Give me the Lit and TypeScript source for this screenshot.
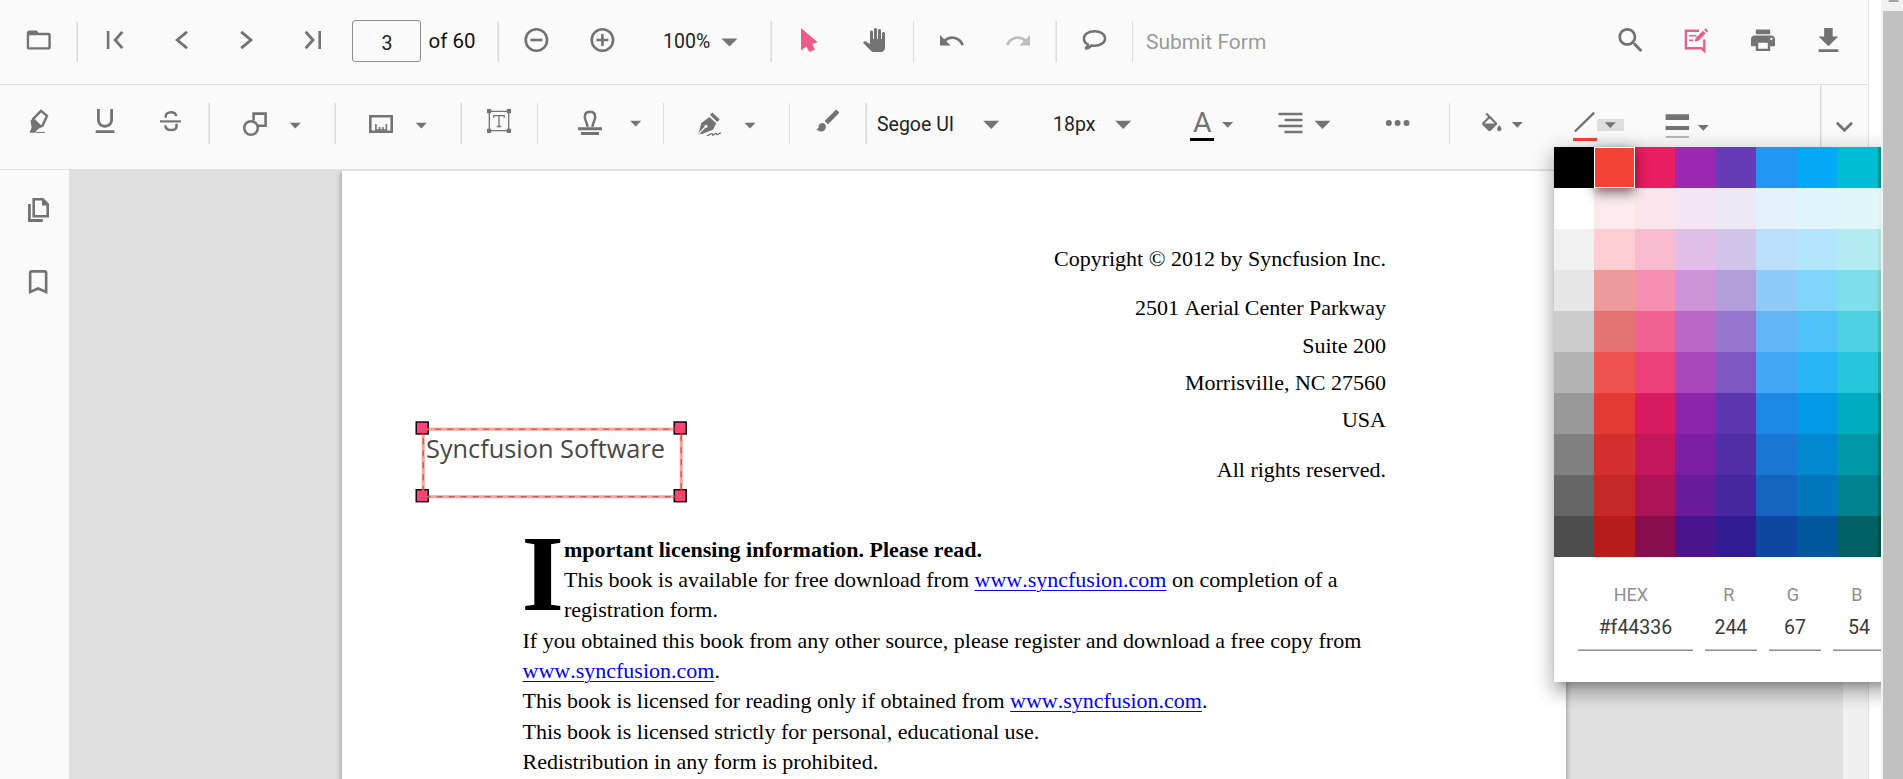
import { LitElement, html, svg, css, TemplateResult } from "lit";
import { customElement, property } from "lit/decorators.js";
import { styleMap } from "lit/directives/style-map.js";
import { classMap } from "lit/directives/class-map.js";

type Slot = [number, TemplateResult];

/* A 24px wide glyph; tall ones leave room for a colour bar under the drawing. */
const icon = (body: unknown, box = "0 0 24 24", h = 24, w = 24) =>
  html`<svg class="icon" width=${w} height=${h} viewBox=${box}>${body}</svg>`;
const fill = (d: string) => svg`<path d=${d} fill="currentColor"/>`;
const line = (d: string, w = 2.6) => svg`<path d=${d} fill="none" stroke="currentColor" stroke-width=${w}/>`;
const tall = (body: unknown, box = "0 0 24 32") => icon(body, box, 32);
const caret = (w: number, h: number, y: number, x = 0) =>
  icon(fill(`M${x} ${y}h${w}l${-w / 2} ${h}z`), "0 0 18 32", 32, 18);
const sep = (wide = false) => html`<i class=${classMap({ sep: true, wide })}></i>`;

const TOP: Slot[] = [
  [27, icon(fill("M20 6h-8l-2-2H4c-1.1 0-1.99.9-1.99 2L2 18c0 1.1.9 2 2 2h16c1.1 0 2-.9 2-2V8c0-1.1-.9-2-2-2zm0 12H4V8h16v10z"), "2.2 2 20 20")],
  [76, sep(true)],
  [103, icon([line("M5.1 3v18"), line("M19.3 3.8L12.2 12l7.1 8.2", 2.8)])],
  [169, icon(line("M18 3.9L8.2 12l9.8 8.1", 2.8))],
  [235, icon(line("M6.2 3.9L16 12l-9.8 8.1", 2.8))],
  [301, icon([line("M18.7 3v18"), line("M4.7 3.8L12 12l-7.3 8.2", 2.8)])],
  [352, html`<div class="page-input">3</div>`],
  [428, html`<span class="label of">of 60</span>`],
  [497, sep(true)],
  [524, icon([svg`<circle cx="12.4" cy="12" r="10.7" fill="none" stroke="currentColor" stroke-width="2.6"/>`, line("M6.4 12h12")])],
  [590, icon([svg`<circle cx="12.4" cy="12" r="10.7" fill="none" stroke="currentColor" stroke-width="2.6"/>`, line("M6.4 12h12M12.4 6v12")])],
  [663, html`<span class="label zoom">100%</span>`],
  [721, caret(16, 8, 10.5, 0.5)],
  [770, sep(true)],
  [797, html`<span class="pink">${icon(fill("M4 0V22.3L9.4 18.5 12.3 24 17.9 21.8 15.4 15.8 20.7 14.2Z"))}</span>`],
  [862, icon(fill("M23 5.5V20c0 2.2-1.8 4-4 4h-7.3c-1.08 0-2.1-.43-2.85-1.19L1 14.83s1.26-1.23 1.3-1.25c.22-.19.49-.29.79-.29.22 0 .42.06.6.16.04.01 4.31 2.46 4.31 2.46V4c0-.83.67-1.5 1.5-1.5S11 3.17 11 4v7h1V1.5c0-.83.67-1.5 1.5-1.5S15 .67 15 1.5V11h1V2.5c0-.83.67-1.5 1.5-1.5s1.5.67 1.5 1.5V11h1V5.5c0-.83.67-1.5 1.5-1.5s1.5.67 1.5 1.5z"))],
  [913, sep()],
  [940, icon(fill("M12.5 8c-2.65 0-5.05.99-6.9 2.6L2 7v9h9l-3.62-3.62c1.39-1.16 3.16-1.88 5.12-1.88 3.54 0 6.55 2.31 7.6 5.5l2.37-.78C21.08 11.03 17.15 8 12.5 8z"), "2 1 20.5 20.5")],
  [1006, html`<span class="off">${icon(fill("M18.4 10.6C16.55 8.99 14.15 8 11.5 8c-4.65 0-8.58 3.03-9.96 7.22L3.9 16c1.05-3.19 4.05-5.5 7.6-5.5 1.95 0 3.73.72 5.12 1.88L13 16h9V7l-3.6 3.6z"), "1.5 1 20.5 20.5")}</span>`],
  [1055, sep(true)],
  [1082, icon(line("M6 16.4C3.2 15 1.9 12.8 1.9 10.4 1.9 6.3 6.6 3.2 12.5 3.2s10.6 3.1 10.6 7.2-4.7 7.4-10.6 7.4c-1 0-2-.1-2.8-.3C8.2 19 6.2 20.2 3.3 20.7 5 19.4 5.9 18.2 6 16.4z", 2.5))],
  [1132, sep()],
  [1146, html`<span class="label submit">Submit Form</span>`],
  [1618, icon(fill("M15.5 14h-.79l-.28-.27C15.41 12.59 16 11.11 16 9.5 16 5.91 13.09 3 9.5 3S3 5.91 3 9.5 5.91 16 9.5 16c1.61 0 3.09-.59 4.23-1.57l.27.28v.79l5 4.99L20.49 19l-4.99-5zm-6 0C7.01 14 5 11.99 5 9.5S7.01 5 9.5 5 14 7.01 14 9.5 11.99 14 9.5 14z"), "2.7 3 17.5 17.5")],
  [1684, html`<span class="pink">${icon([
    line("M15 2.8H1.9v17.5h15.8l2.6 2.4V11.5", 2.4),
    line("M5 7.8h7.5M5 12.3h4.5", 1.5),
    fill("M10.8 13.6l.9-3.7L18.9 2.8l2.7 2.7-7.2 7.2zM20 1.8l1.6-1.5 2.6 2.6-1.5 1.6z"),
  ])}</span>`],
  [1751, icon(fill("M19 8H5c-1.66 0-3 1.34-3 3v6h4v4h12v-4h4v-6c0-1.66-1.34-3-3-3zm-3 11H8v-5h8v5zm3-7c-.55 0-1-.45-1-1s.45-1 1-1 1 .45 1 1-.45 1-1 1zm-1-9H6v4h12V3z"), "2 1.8 20 20")],
  [1816, icon(fill("M19 9h-4V3H9v6H5l7 7 7-7zM5 18v2h14v-2H5z"), "3.2 3 17 17")],
];

const BOTTOM: Slot[] = [
  [26, tall([line("M6.5 10.6L15 1.8l6 5-5 11", 2.4), fill("M4.6 11.5l3-2.5L16.8 17.8 12.2 20 8.6 23.7H3.4l2.2-5z"), line("M9.5 23.4H19", 1)])],
  [93, tall(fill("M12 17c3.31 0 6-2.69 6-6V3h-2.100v8c0 2.200-1.700 3.900-3.900 3.900S8.100 13.200 8.100 11V3H6v8c0 3.310 2.690 6 6 6zm-7 2v2h14v-2H5z"), "3 3 18 24")],
  [158, tall([line("M2 12.4h21", 2.1), line("M7.8 8.8C7 5.4 9.5 3.2 12.9 3.2c3 0 5.1 1.5 5.3 4", 2.5), line("M7.3 16.3c.2 3.1 2.6 4.8 5.9 4.8 3.2 0 5.4-1.6 5.4-4.1 0-.9-.2-1.5-.5-2.1", 2.5)])],
  [208, sep(true)],
  [243, tall([svg`<circle cx="8" cy="19" r="6.8" fill="none" stroke="currentColor" stroke-width="2.5"/>`, line("M10.6 11.5V4.6H22.6V16.8H15")])],
  [289, caret(11, 5.8, 13.8, 0.8)],
  [334, sep(true)],
  [369, tall([line("M1.3 7.3h21.4v15.4H1.3z"), line("M6.9 15v6.5M10.6 18v3.5M14 18v3.5M17.4 15v6.5", 1.6), line("M6.2 21H18", 1.6)])],
  [415, caret(11, 5.8, 13.8, 0.8)],
  [460, sep(true)],
  [487, tall([line("M2.3 2.3h19.4v19.4H2.3z", 1.3), fill("M0 0h4.2v4.2H0zM19.8 0H24v4.2h-4.2zM0 19.8h4.2V24H0zM19.8 19.8H24V24h-4.2z"), line("M6.8 8.8V6.7h10.4v2.1M12 6.7v11M9.8 17.5h4.4", 1.3)])],
  [537, sep()],
  [578, tall([line("M9.4 18c.6-3.5-2.6-6-2.6-10 0-3.2 2-5.2 5.2-5.2S17.200 4.8 17.200 8c0 4-3.200 6.500-2.600 10", 2.5), fill("M0 18.300h24v3H0zM3 23h18v3H3z")])],
  [630, caret(11, 5.8, 11.8, 0.2)],
  [663, sep()],
  [698, tall([
    fill("M.3 25.300L3.200 14.200 11.300 8 18.300 14.200 15 20.800 4 25z"),
    svg`<path d="M.8 24.500L7.500 17.800" stroke="#fafafa" stroke-width="1.300"/><circle cx="8" cy="17.300" r="1.500" fill="#fafafa"/>`,
    line("M13.200 4.800l7.300 6.900", 3.4),
    line("M8.800 26.500c3.500.3 3.600-2.800 5.600-1.800.8.700-.8 1.500.6 1.400 1.400-.3 1.800-2.200 3.400-1.600.8.500-.2 1.300.9 1.200 1-.2 1.500-2.200 3.700-1.300", 1.2),
  ])],
  [744, caret(11, 5.8, 13.8, 0.5)],
  [789, sep()],
  [816, tall(fill("M7 14c-1.66 0-3 1.34-3 3 0 1.31-1.16 2-2 2 .92 1.22 2.49 2 4 2 2.21 0 4-1.79 4-4 0-1.66-1.34-3-3-3zm13.71-9.37l-1.34-1.34c-.39-.39-1.02-.39-1.41 0L9 12.25 11.75 15l8.96-8.96c.39-.39.39-1.02 0-1.41z"), "1.800 2.300 20 26.670")],
  [865, sep(true)],
  [877, html`<span class="label font">Segoe UI</span>`],
  [983, caret(16, 8.3, 11.7, 0.2)],
  [1053, html`<span class="label font">18px</span>`],
  [1115, caret(16, 8.3, 11.7, 0.2)],
  [1190, tall([svg`<text x="12.200" y="23.300" text-anchor="middle" font-size="28.500" font-family="Roboto, sans-serif" fill="currentColor">A</text>`, svg`<path d="M0 29h24v3H0z" fill="#000"/>`])],
  [1222, caret(11, 5.8, 13, 0.2)],
  [1278, tall(line("M.5 5h24M6.500 11h18M.5 17h24M6.500 23h18", 2.5))],
  [1314, caret(16, 8.3, 11.7, 0.5)],
  [1386, tall(fill("M-.2 14a3 3 0 1 0 6 0 3 3 0 1 0-6 0zM8.600 14a3 3 0 1 0 6 0 3 3 0 1 0-6 0zM17.500 14a3 3 0 1 0 6 0 3 3 0 1 0-6 0z"))],
  [1449, sep()],
  [1482, tall(fill("M16.56 8.94L7.62 0 6.21 1.41l2.38 2.38-5.15 5.15c-.59.59-.59 1.54 0 2.12l5.5 5.5c.29.29.68.44 1.06.44s.77-.15 1.06-.44l5.5-5.5c.59-.58.59-1.53 0-2.12zM5.21 10L10 5.21 14.790 10H5.210zM19 11.500s-2 2.170-2 3.500c0 1.100.9 2 2 2s2-.9 2-2c0-1.330-2-3.500-2-3.500z"), "3 -3.500 22.200 29.600")],
  [1511, caret(11, 5.8, 13, 0.8)],
  [1573, tall([line("M1.900 22.500L21.200 3.600", 2.4), svg`<path d="M0 29h24v3H0z" fill="#f44336"/>`])],
  [1597, html`<div class="pressed">${icon(fill("M7.800 3.200h11l-5.500 5.800z"), "0 0 27 12", 12, 27)}</div>`],
  [1665, tall(fill("M.6 5h24v6h-24zM.6 17h24v4h-24zM.6 27.700h24v1.200h-24z"), "0 0 24.600 32")],
  [1697, caret(11, 5.8, 16, 0.8)],
  [1820, html`<i class="divider"></i>`],
  [1835, tall(line("M1.900 13.700l7.500 7.500 7.600-7.500", 2.8))],
];

@customElement("viewer-toolbar")
class ViewerToolbar extends LitElement {
  @property({ attribute: false }) slots: Slot[] = [];
  static styles = css`
    :host { display: block; height: 84px; background: #fafafa; border-bottom: 1px solid #dfdfdf; color: #737373; --drop: 28px; --rule: 21px; }
    :host([secondary]) { --drop: 24px; --rule: 18px; }
    .row { display: grid; height: 84px; align-items: start; }
    .cell { min-width: 0; white-space: nowrap; height: 84px; }
    .icon { display: block; margin-top: var(--drop); overflow: visible; }
    .sep { display: block; width: 1px; height: 41px; margin-top: var(--rule); background: #dcdcdc; }
    .sep.wide { width: 2px; background: linear-gradient(90deg, #e9e9e9 50%, #dcdcdc 50%); }
    .divider { display: block; width: 2px; height: 84px; background: linear-gradient(90deg, #d8d8d8 50%, #ececec 50%); }
    .page-input { width: 69px; height: 42px; box-sizing: border-box; margin-top: 20px; border: 1px solid #8f8f8f; border-radius: 3px;
      font: 19.500px/45px Roboto, sans-serif; text-align: center; color: #222; padding-left: 1px; }
    .label { display: block; font: 19.500px/24px Roboto, sans-serif; color: #111; margin-top: 30px; }
    .of { font-size: 20.500px; margin-top: 29px; padding-left: 0.500px; }
    .zoom { color: #222; }
    .submit { font-size: 21px; color: #9a9a9a; }
    .font { margin-top: 28px; color: #222; }
    .pink { color: #ed5b8c; }
    .off { color: #bdbdbd; }
    .pressed { width: 27px; height: 12px; margin-top: 34px; background: #dedede; }
    .pressed .icon { margin-top: 0; }
  `;
  render() {
    const starts = this.slots.map(([at]) => at);
    const columns = starts.map((at, i) => (i + 1 < starts.length ? `${starts[i + 1] - at}px` : "1fr")).join(" ");
    return html`<div class="row" style=${styleMap({ gridTemplateColumns: columns, paddingLeft: `${starts[0] ?? 0}px` })}>
      ${this.slots.map(([, body]) => html`<div class="cell">${body}</div>`)}
    </div>`;
  }
}

const PALETTE = [
  "#000000 #f44336 #e91e63 #9c27b0 #673ab7 #2196f3 #03a9f4 #00bcd4 #009688",
  "#ffffff #ffebee #fce4ec #f3e5f5 #ede7f6 #e3f2fd #e1f5fe #e0f7fa #e0f2f1",
  "#f2f2f2 #ffcdd2 #f8bbd0 #e1bee7 #d1c4e9 #bbdefb #b3e5fc #b2ebf2 #b2dfdb",
  "#e6e6e6 #ef9a9a #f48fb1 #ce93d8 #b39ddb #90caf9 #81d4fa #80deea #80cbc4",
  "#cccccc #e57373 #f06292 #ba68c8 #9575cd #64b5f6 #4fc3f7 #4dd0e1 #4db6ac",
  "#b3b3b3 #ef5350 #ec407a #ab47bc #7e57c2 #42a5f5 #29b6f6 #26c6da #26a69a",
  "#999999 #e53935 #d81b60 #8e24aa #5e35b1 #1e88e5 #039be5 #00acc1 #00897b",
  "#808080 #d32f2f #c2185b #7b1fa2 #512da8 #1976d2 #0288d1 #0097a7 #00796b",
  "#666666 #c62828 #ad1457 #6a1b9a #4527a0 #1565c0 #0277bd #00838f #00695c",
  "#4d4d4d #b71c1c #880e4f #4a148c #311b92 #0d47a1 #01579b #006064 #004d40",
].map((row) => row.split(" "));

@customElement("color-palette")
class ColorPalette extends LitElement {
  @property() value = "#f44336";
  static styles = css`
    :host { display: block; width: 405px; height: 535px; background: #fff; font-family: Roboto, sans-serif;
      box-shadow: 0 7.500px 7.500px -4.500px rgba(0,0,0,.2), 0 12px 15px 1.500px rgba(0,0,0,.14), 0 4.500px 21px 3px rgba(0,0,0,.2); }
    .grid { display: grid; grid-template-columns: repeat(9, 40.500px); grid-auto-rows: 41px; }
    .tile.chosen { border: 1px solid #fff; z-index: 1;
      box-shadow: 0 4.500px 7.500px -1.500px rgba(0,0,0,.25), 0 7.500px 12px rgba(0,0,0,.18), 0 1.500px 15px rgba(0,0,0,.3); }
    .fields { display: flex; gap: 12px; padding: 26px 0 0 24px; }
    .field { width: 52px; text-align: center; flex: none; }
    .field.hex { width: 115px; }
    .name { font-size: 18px; line-height: 24px; color: #8f8f8f; padding-right: 4px; }
    .hex .name { padding-right: 9px; }
    .value { font-size: 19.500px; line-height: 24px; color: #3a3a3a; padding: 9px 0 10px; border-bottom: 1px solid #8e8e8e; box-shadow: inset 0 -1px #c4c4c4; }
  `;
  render() {
    const rgb = [1, 3, 5].map((i) => parseInt(this.value.slice(i, i + 2), 16));
    const fields: [string, string | number][] = [["HEX", this.value], ["R", rgb[0]], ["G", rgb[1]], ["B", rgb[2]]];
    return html`
      <div class="grid">${PALETTE.flat().map((c) => html`<div class=${classMap({ tile: true, chosen: c === this.value })} style=${styleMap({ backgroundColor: c })}></div>`)}</div>
      <div class="fields">${fields.map(([name, value]) => html`<div class=${classMap({ field: true, hex: name === "HEX" })}>
        <div class="name">${name}</div><div class="value">${value}</div></div>`)}</div>`;
  }
}

@customElement("document-page")
class DocumentPage extends LitElement {
  static styles = css`
    :host { display: block; position: relative; box-sizing: border-box; width: 1224px; height: 1584px; background: #fff; box-shadow: 0 0 6px rgba(0,0,0,.4);
      clip-path: inset(0 -10px 0 -10px); font: 22px/30.350px "Liberation Serif", "Times New Roman", serif; font-kerning: none; color: #000; }
    .address { padding: 69px 180px 0 0; text-align: right; line-height: 37.300px; white-space: pre-line; }
    .address p { margin: 0 0 12.100px; }
    .licence { padding: 34.500px 0 0 180.500px; white-space: nowrap; }
    .licence p { margin: 0; }
    .drop { float: left; font: bold 109px/91px "Liberation Serif", serif; width: 41.500px; height: 91px; }
    .drop span { display: block; margin: -6.500px 0 0 -1px; }
    .link { color: #00f; text-decoration: underline; text-decoration-thickness: 1px; text-underline-offset: 3px; }
    .note { position: absolute; left: 70px; top: 247px; overflow: visible; }
  `;
  render() {
    const link = html`<span class="link">www.syncfusion.com</span>`;
    const handles = [[6, 4], [264, 4], [6, 71.700], [264, 71.700]];
    return html`
      <div class="address"><p>Copyright © 2012 by Syncfusion Inc.</p><p>2501 Aerial Center Parkway
Suite 200
Morrisville, NC 27560
USA</p><p>All rights reserved.</p></div>
      <div class="licence">
        <div class="drop"><span>I</span></div>
        <p><b>mportant licensing information. Please read.</b></p>
        <p>This book is available for free download from ${link} on completion of a</p>
        <p>registration form.</p>
        <p>If you obtained this book from any other source, please register and download a free copy from</p>
        <p>${link}.</p>
        <p>This book is licensed for reading only if obtained from ${link}.</p>
        <p>This book is licensed strictly for personal, educational use.</p>
        <p>Redistribution in any form is prohibited.</p>
      </div>
      <svg class="note" width="280" height="90" viewBox="0 0 280 90">
        ${handles.map(([x, y]) => svg`<rect x=${x - 1.800} y=${y} width="12" height="12" fill="#ff4081" stroke="#000" stroke-width="1.400"/>`)}
        <rect x="11.200" y="11.200" width="258" height="67.500" fill="none" stroke="#8a8a8a" stroke-width="1.500" stroke-dasharray="6 6"/>
        <rect x="11.200" y="11.200" width="258" height="67.500" fill="none" stroke="#f44336" stroke-opacity=".5" stroke-width="3"/>
        <text x="14" y="39.500" font-family="Open Sans, Noto Sans, sans-serif" font-size="26" fill="#484848" textLength="239" lengthAdjust="spacingAndGlyphs">Syncfusion Software</text>
      </svg>`;
  }
}

@customElement("app-root")
class AppRoot extends LitElement {
  static styles = css`
    :host { display: flex; height: 779px; width: 1903px; overflow: hidden; background: #fff; }
    .content { position: relative; width: 1881px; height: 779px; overflow: hidden; }
    .viewer { width: 1868px; height: 779px; border-right: 1px solid #dfdfdf; display: flex; flex-direction: column; }
    .body { flex: 1; display: flex; min-height: 0; }
    .side { width: 69px; background: #fafafa; color: #737373; display: flex; flex-direction: column; align-items: center; gap: 48px; padding-top: 28px; box-sizing: border-box; }
    .side .icon { display: block; margin-left: 10px; }
    .canvas { width: 1774px; background: #e0e0e0; overflow: hidden; padding: 1px 0 0 273px; box-sizing: border-box; }
    .inner-scroll { width: 25px; background: #f0f0f0; }
    .popup { position: absolute; left: 1553.900px; top: 147px; z-index: 2; }
    .scroll { width: 22px; background: #f1f1f1; }
    .arrow { height: 2px; width: 11px; margin: 0 0 9px 7px; background: #a3a3a3; clip-path: polygon(10% 0, 90% 0, 100% 100%, 0 100%); }
    .thumb { margin-left: 2px; height: 768px; background: #c1c1c1; }
  `;
  render() {
    return html`
      <div class="content">
        <div class="viewer">
          <viewer-toolbar .slots=${TOP}></viewer-toolbar>
          <viewer-toolbar secondary .slots=${BOTTOM}></viewer-toolbar>
          <div class="body">
            <div class="side">
              ${icon([line("M1.400 6v16.500h13.400", 2.8), line("M5.700 1.300h9l5 5v12h-14z", 2.6), fill("M14 1v6.500h6.500z")])}
              ${icon(fill("M17 3H7c-1.1 0-1.99.9-1.99 2L5 21l7-3 7 3V5c0-1.1-.9-2-2-2zm0 15l-5-2.18L7 18V5h10v13z"), "4.400 3 18 18")}
            </div>
            <div class="canvas"><document-page></document-page></div>
            <div class="inner-scroll"></div>
          </div>
        </div>
        <color-palette class="popup"></color-palette>
      </div>
      <div class="scroll"><div class="arrow"></div><div class="thumb"></div></div>`;
  }
}
